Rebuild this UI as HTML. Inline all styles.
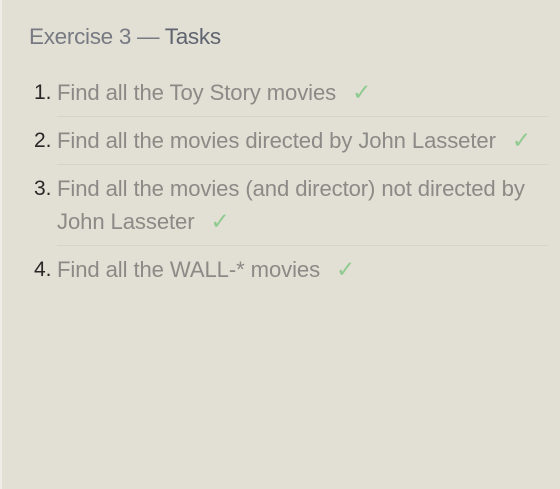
<!DOCTYPE html>
<html><head><meta charset="utf-8"><style>
html,body{margin:0;padding:0}
body{width:560px;height:489px;background:#e2dfd4;font-family:"Liberation Sans",sans-serif;position:relative;overflow:hidden}
.strip{position:absolute;left:0;top:0;width:2px;height:489px;background:#eeede8}
h1{position:absolute;left:29px;top:24px;margin:0;font-weight:normal;font-size:22.5px;color:#777a82;letter-spacing:-0.3px}
h1 span{color:#5f6470}
ol{position:absolute;left:57px;top:69px;width:491px;margin:0;padding:0;list-style:none}
li{position:relative;font-size:22.1px;line-height:33px;color:#8b8a86;padding:7px 0;border-bottom:1px solid #d6d3c8;letter-spacing:-0.1px}
li:last-child{border-bottom:none}
li b{position:absolute;left:-23px;top:7px;font-weight:normal;color:#2a2628;font-size:21px}
.c{color:#8fcb8f;margin-left:16px;font-size:23px}
</style></head><body>
<div class="strip"></div>
<h1>Exercise 3 — <span>Tasks</span></h1>
<ol>
<li><b>1.</b>Find all the Toy Story movies<span class="c">✓</span></li>
<li><b>2.</b>Find all the movies directed by John Lasseter<span class="c">✓</span></li>
<li><b>3.</b>Find all the movies (and director) not directed by John Lasseter<span class="c">✓</span></li>
<li><b>4.</b>Find all the WALL-* movies<span class="c">✓</span></li>
</ol>
</body></html>
